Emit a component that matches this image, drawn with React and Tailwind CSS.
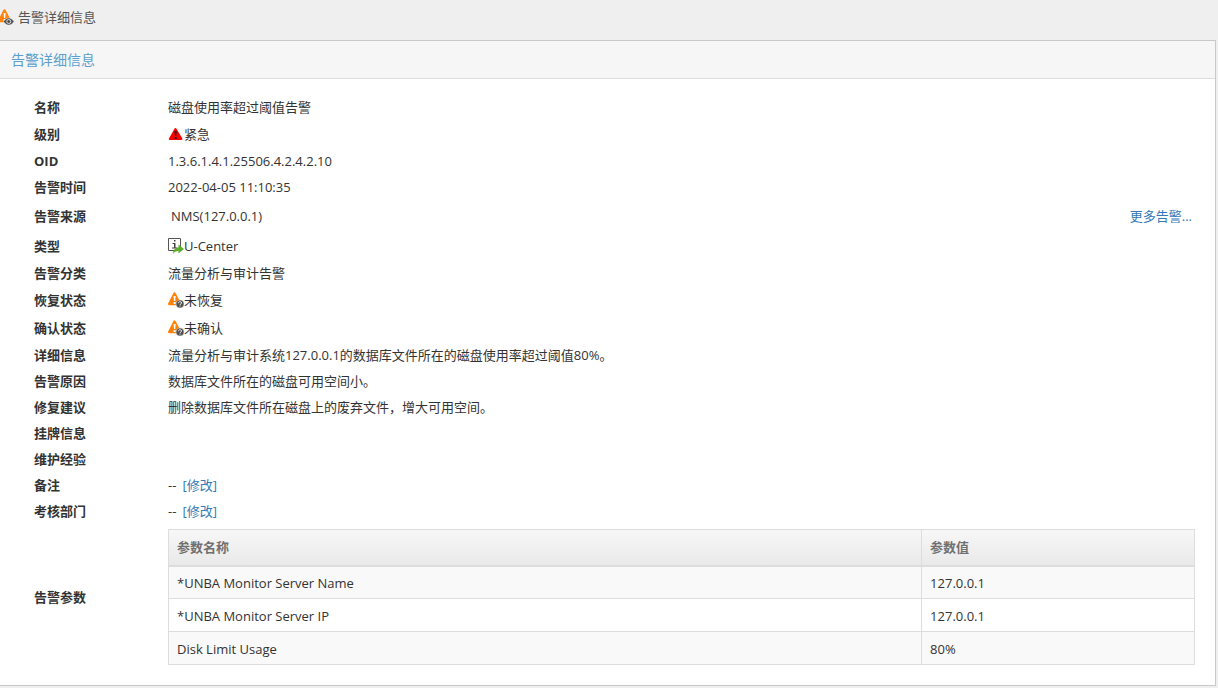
import React from 'react';

const UrgentIcon = () => (
  <svg className="w-4 h-4 shrink-0" viewBox="0 0 16 16" aria-hidden="true">
    <path d="M7.500 3L13.500 13H1.800z" fill="#f80000" stroke="#f80000" strokeWidth="2" strokeLinejoin="round" />
    <path d="M6.500 5h2.200l-.5 5H7zM6.600 11h2v2h-2z" fill="#1c1c1c" />
  </svg>
);

const WarnTriangle = () => (
  <>
    <path d="M6.500 1.500L12 12H1.200z" fill="#ff8105" stroke="#ff8105" strokeWidth="2.400" strokeLinejoin="round" />
    <path d="M5.500 4h2.200l-.5 5H6zM5.600 10h2v2h-2z" fill="#fff" />
  </>
);

const PendingIcon = () => (
  <svg className="w-4 h-4 shrink-0" viewBox="0 0 16 16" aria-hidden="true">
    <WarnTriangle />
    <circle cx="12" cy="12" r="4" fill="#505050" stroke="#fff" strokeWidth=".4" />
    <path d="M10.500 11.200c0-2 3-2 3-.2 0 1-1.500 1-1.500 2M12 13.600v1" fill="none" stroke="#fff" />
  </svg>
);

const DetailIcon = () => (
  <svg className="w-[14px] h-4 shrink-0" viewBox="2 0 14 16" aria-hidden="true">
    <WarnTriangle />
    <path d="M5.500 12.500c3-4.700 7.500-4.700 10.500 0-3 4.700-7.500 4.700-10.500 0z" fill="#505050" stroke="#efefef" strokeWidth=".5" />
    <circle cx="10.750" cy="12.500" r="2" fill="#505050" stroke="#ddd" />
  </svg>
);

const CenterIcon = () => (
  <svg className="w-4 h-4 shrink-0 overflow-visible" viewBox="0 0 16 16" aria-hidden="true">
    <path d="M.5.500h12v12H.5z" fill="#fff" stroke="#555" />
    <path d="M6 2h1.500v1.500H6zM4.500 5h3v4.500H9v1H4v-1h2V6H4.500z" fill="#444" />
    <path d="M10.500 6.500l5.500 4.500-5.500 4.500V13c-2.500-.1-4.200.8-5.500 3 .2-4 2-6.300 5.500-6.700z" fill="#5fae2e" />
  </svg>
);

const details = [
  { label: '名称', value: '磁盘使用率超过阈值告警', height: 'h-[26px]' },
  { label: '级别', value: '紧急', icon: <UrgentIcon />, height: 'h-[28px]' },
  { label: 'OID', value: '1.3.6.1.4.1.25506.4.2.4.2.10', height: 'h-[26px]' },
  { label: '告警时间', value: '2022-04-05 11:10:35', height: 'h-[26px]' },
  { label: '告警来源', value: 'NMS(127.0.0.1)', more: true, height: 'h-[32px]' },
  { label: '类型', value: 'U-Center', icon: <CenterIcon />, height: 'h-[27px]' },
  { label: '告警分类', value: '流量分析与审计告警', height: 'h-[27px]' },
  { label: '恢复状态', value: '未恢复', icon: <PendingIcon />, height: 'h-[28px]' },
  { label: '确认状态', value: '未确认', icon: <PendingIcon />, height: 'h-[28px]' },
  {
    label: '详细信息',
    value: '流量分析与审计系统127.0.0.1的数据库文件所在的磁盘使用率超过阈值80%。',
    height: 'h-[26px]',
  },
  { label: '告警原因', value: '数据库文件所在的磁盘可用空间小。', height: 'h-[26px]' },
  { label: '修复建议', value: '删除数据库文件所在磁盘上的废弃文件，增大可用空间。', height: 'h-[26px]' },
  { label: '挂牌信息', value: '', height: 'h-[26px]' },
  { label: '维护经验', value: '', height: 'h-[26px]' },
  { label: '备注', value: '--', editable: true, height: 'h-[26px]' },
  { label: '考核部门', value: '--', editable: true, height: 'h-[26px]' },
];

const params = [
  { name: '*UNBA Monitor Server Name', value: '127.0.0.1' },
  { name: '*UNBA Monitor Server IP', value: '127.0.0.1' },
  { name: 'Disk Limit Usage', value: '80%' },
];

const DetailRow = ({ label, value, icon, more, editable, height }) => (
  <tr className={height}>
    <th scope="row" className="px-2 pb-0.5 text-left font-bold">{label}</th>
    <td className="px-2 pb-0.5">
      <div className="flex items-center">
        {icon}
        <span className={more ? 'pl-[3px]' : ''}>{value}</span>
        {more && <a href="#more" className="ml-auto pr-[3px] text-[#337ab7]">更多告警...</a>}
        {editable && <a href="#edit" className="ml-1.5 text-[#337ab7]">[修改]</a>}
      </div>
    </td>
  </tr>
);

const ParamTable = () => (
  <table className="w-full table-fixed border-collapse border border-[#ddd]">
    <colgroup>
      <col className="w-[73.4%]" />
      <col />
    </colgroup>
    <thead>
      <tr className="h-9 bg-linear-to-b from-[#f7f7f7] to-[#e9e9e9] text-[#707070]">
        <th scope="col" className="border border-b-2 border-[#ddd] px-2 text-left font-bold">参数名称</th>
        <th scope="col" className="border border-b-2 border-[#ddd] px-2 text-left font-bold">参数值</th>
      </tr>
    </thead>
    <tbody>
      {params.map((p) => (
        <tr key={p.name} className="h-[33px] odd:bg-[#f9f9f9]">
          <td className="border border-[#ddd] px-2 pt-0.5">{p.name}</td>
          <td className="border border-[#ddd] px-2 pt-0.5">{p.value}</td>
        </tr>
      ))}
    </tbody>
  </table>
);

export default function App() {
  return (
    <div className="min-h-screen bg-[#efefef] pr-[2px] text-[13px] leading-5 text-[#333] font-['Open_Sans','Noto_Sans_CJK_SC',sans-serif]">
      <header className="flex h-10 items-center pb-1.5">
        <DetailIcon />
        <h1 className="ml-1 text-[#555]">告警详细信息</h1>
      </header>

      <section className="border-y border-r border-[#c9c9c9] bg-white">
        <h2 className="flex h-[38px] items-center border-b border-[#ddd] bg-[#f6f6f6] px-[11px] text-sm text-[#5c9fcc]">
          告警详细信息
        </h2>
        <div className="py-4 pl-[26px] pr-3">
          <table className="w-full table-fixed">
            <colgroup>
              <col className="w-[134px]" />
              <col />
            </colgroup>
            <tbody>
              {details.map((row) => (
                <DetailRow key={row.label} {...row} />
              ))}
              <tr>
                <th scope="row" className="px-2 text-left font-bold">告警参数</th>
                <td className="px-2 py-1">
                  <ParamTable />
                </td>
              </tr>
            </tbody>
          </table>
        </div>
      </section>
    </div>
  );
}
